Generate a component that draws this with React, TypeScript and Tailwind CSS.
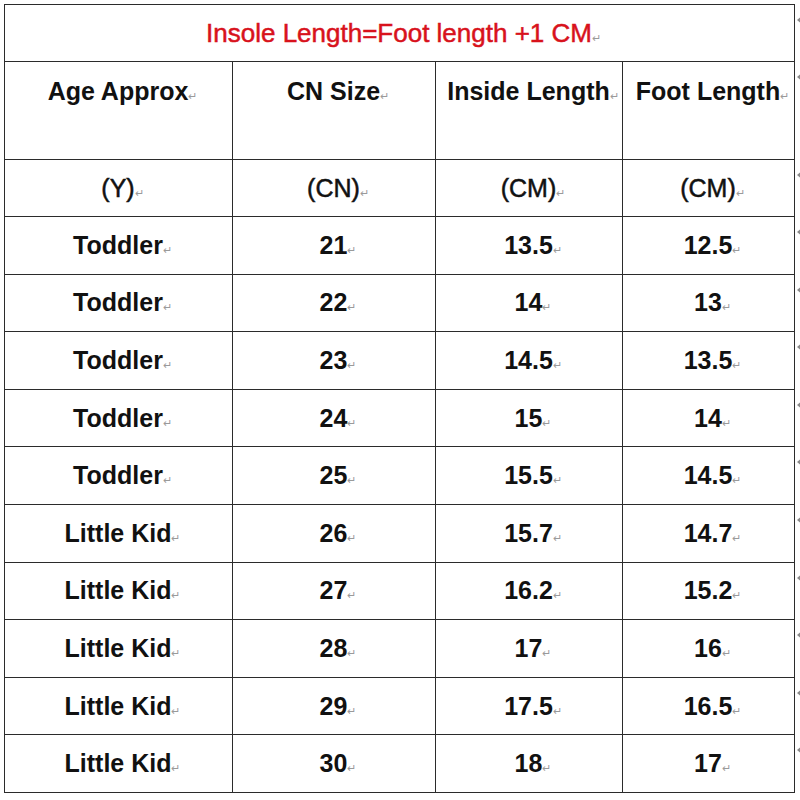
const ROWS = [
  ['Toddler', '21', '13.5', '12.5'],
  ['Toddler', '22', '14', '13'],
  ['Toddler', '23', '14.5', '13.5'],
  ['Toddler', '24', '15', '14'],
  ['Toddler', '25', '15.5', '14.5'],
  ['Little Kid', '26', '15.7', '14.7'],
  ['Little Kid', '27', '16.2', '15.2'],
  ['Little Kid', '28', '17', '16'],
  ['Little Kid', '29', '17.5', '16.5'],
  ['Little Kid', '30', '18', '17'],
];

// Word's paragraph mark after each cell text
function Mark() {
  return <span className="text-[11px] font-normal text-[#9a9a9a] align-baseline [-webkit-text-stroke:0]">↵</span>;
}

// end-of-row markers sitting outside the right border
function RowEnd({ h }: { h: string }) {
  return (
    <div className={`${h} pt-[12px]`}>
      <div className="h-0 w-0 border-y-[4px] border-r-[5px] border-y-transparent border-r-[#8a8a8a]" />
    </div>
  );
}

const cell = 'border border-[#2b2b2b] text-center p-0 pl-[8px] whitespace-nowrap';

export default function App() {
  return (
    <div className="flex min-h-[800px] w-[800px] items-start overflow-hidden bg-white pl-[4px] pt-[4px] text-[#111]" style={{ fontFamily: '"Liberation Sans", Arial, sans-serif' }}>
      <table className="w-[790px] shrink-0 table-fixed border-collapse border-[1.5px] border-[#2b2b2b] text-[25px] font-bold leading-none">
        <colgroup>
          <col className="w-[228px]" />
          <col className="w-[203px]" />
          <col className="w-[187px]" />
          <col className="w-[172px]" />
        </colgroup>
        <tbody>
          <tr className="h-[57px]">
            <td colSpan={4} className={`${cell} text-[26px] font-normal text-[#d8121c] [-webkit-text-stroke:0.5px_#d8121c]`}>
              Insole Length=Foot length +1 CM<Mark />
            </td>
          </tr>
          <tr className="h-[98px]">
            {['Age Approx', 'CN Size', 'Inside Length', 'Foot Length'].map(h => (
              <td key={h} className={`${cell} align-top pt-[17px]`}>
                {h}<Mark />
              </td>
            ))}
          </tr>
          <tr className="h-[57px]">
            {['(Y)', '(CN)', '(CM)', '(CM)'].map((u, i) => (
              <td key={i} className={`${cell} font-normal [-webkit-text-stroke:0.5px_#111]`}>
                {u}<Mark />
              </td>
            ))}
          </tr>
          {ROWS.map((r, i) => (
            <tr key={i} className="h-[57.6px]">
              {r.map((v, j) => (
                <td key={j} className={cell}>
                  {v}<Mark />
                </td>
              ))}
            </tr>
          ))}
        </tbody>
      </table>
      <div className="flex flex-col pl-[2px]">
        <RowEnd h="h-[57px]" />
        <RowEnd h="h-[98px]" />
        <RowEnd h="h-[57px]" />
        {ROWS.map((_, i) => (
          <RowEnd key={i} h="h-[57.6px]" />
        ))}
      </div>
    </div>
  );
}
